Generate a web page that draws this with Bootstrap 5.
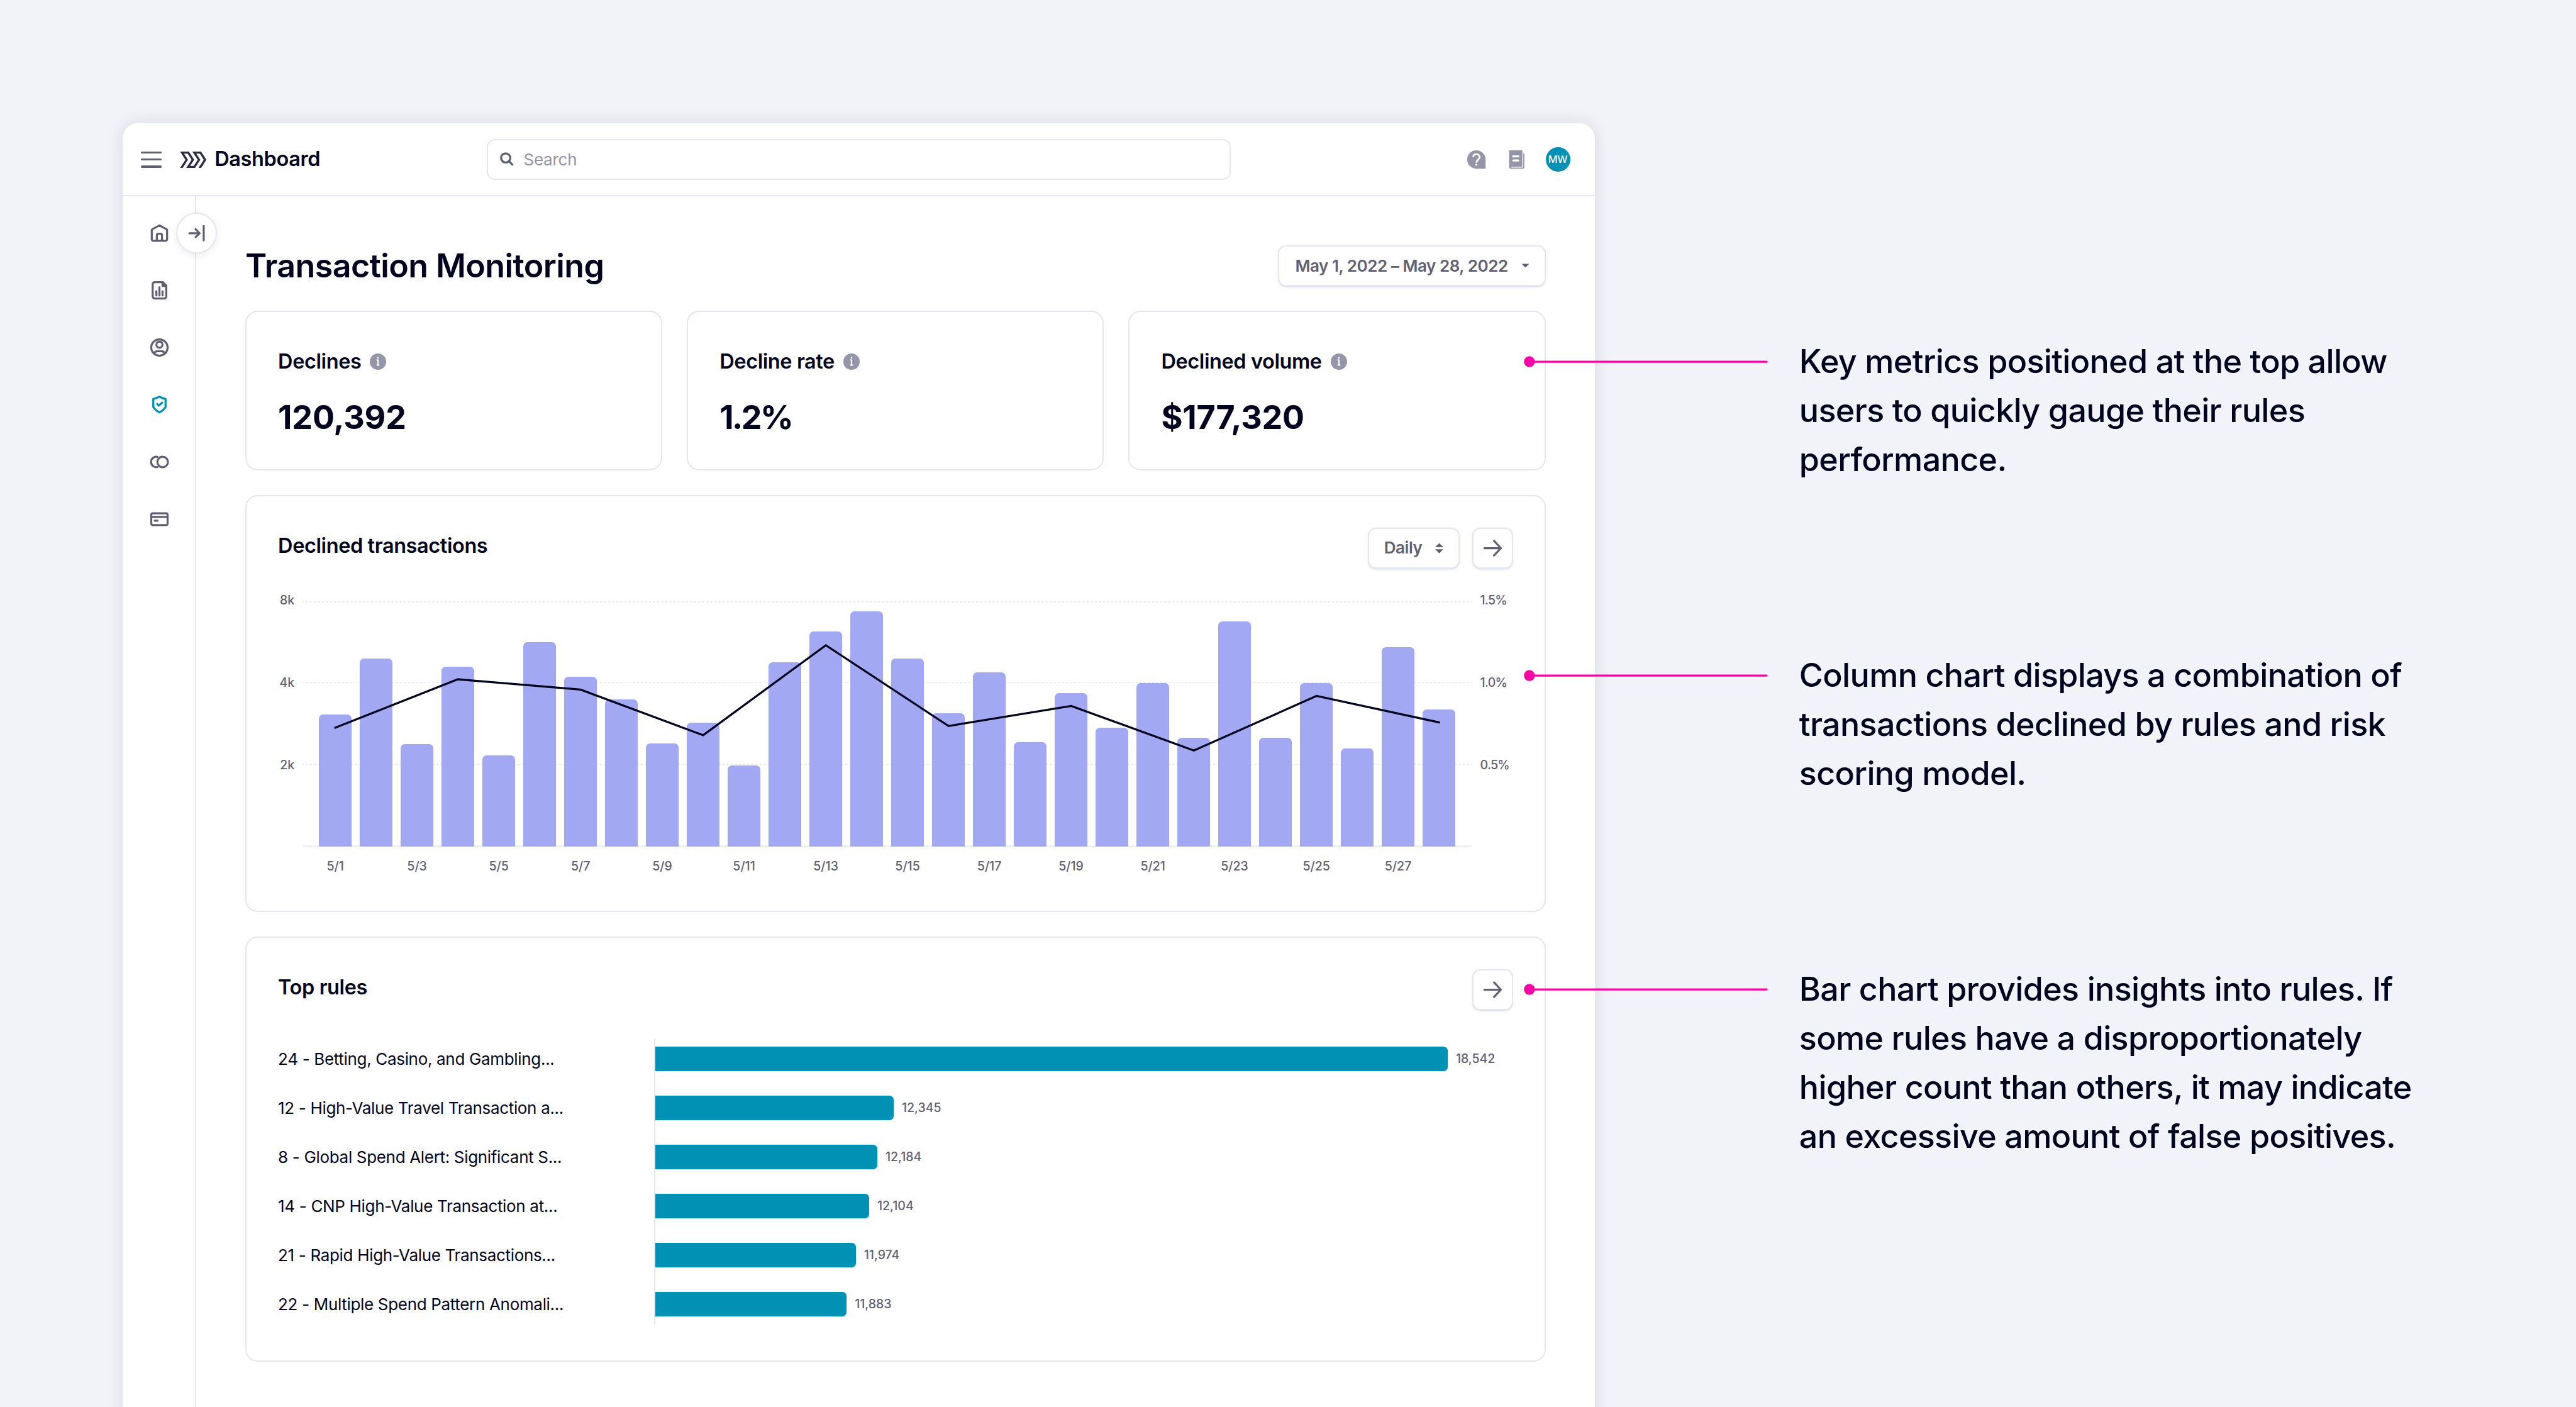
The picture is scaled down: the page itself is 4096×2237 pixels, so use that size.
<!doctype html>
<html lang="en">
<head>
<meta charset="utf-8">
<meta name="viewport" content="width=device-width, initial-scale=1">
<title>Transaction Monitoring</title>
<link href="https://cdn.jsdelivr.net/npm/bootstrap@5.3.0/dist/css/bootstrap.min.css" rel="stylesheet">
<style>
  :root {
    font-size: 26.0063px;
    --u: .0625rem;
    --ink: #01041e;
    --muted: #5f6073;
    --soft: #9495a8;
    --line: #e5e7ef;
    --teal: #0091b5;
    --pink: #ff00a8;
  }
  body {
    background: #f1f3f8;
    color: var(--ink);
    font-family: Inter, "Liberation Sans", sans-serif;
    height: 2237px;
    overflow: hidden;
  }
  svg { display: block; flex: none; overflow: visible; }
  .ico { width: 1.5rem; height: 1.5rem; fill: none; stroke: var(--muted); stroke-width: 2; stroke-linecap: round; stroke-linejoin: round; }
  .app-window {
    width: calc(1440 * var(--u));
    height: calc(1300 * var(--u));
    margin: calc(120 * var(--u)) 0 0 calc(120 * var(--u));
    border-radius: 1rem;
    box-shadow: 0 0 calc(17 * var(--u)) rgba(0, 10, 50, .11);
  }
  .topbar { height: calc(72 * var(--u)); border-bottom: 2px solid var(--line); padding: 2px 1.5rem 0 calc(18 * var(--u)); }
  .topbar-side { width: calc(338 * var(--u)); }
  .burger { width: calc(20 * var(--u)); height: 1rem; margin-right: calc(18 * var(--u)); }
  .burger span { height: calc(2.33 * var(--u)); background: var(--muted); border-radius: var(--u); }
  .brand-logo { width: calc(26 * var(--u)); height: 1rem; overflow: hidden; }
  .heading { font-size: calc(20 * var(--u)); font-weight: 600; line-height: calc(36 * var(--u)); letter-spacing: -.0125em; white-space: nowrap; margin: 0; }
  .search-box { width: calc(728 * var(--u)); height: 2.5rem; border: 2px solid var(--line); border-radius: .5rem; padding-left: calc(7 * var(--u)); gap: .25rem; font-size: 1rem; line-height: 1; letter-spacing: -.01em; color: var(--soft); }
  .avatar { width: 1.5rem; height: 1.5rem; font-size: calc(10 * var(--u)); font-weight: 500; line-height: 1; letter-spacing: -.02em; background: var(--teal); }
  .side { width: calc(72 * var(--u)); border-right: 2px solid var(--line); padding: 1.5rem 0 0 2px; gap: 2rem; }
  .side-toggle { top: 1rem; left: calc(52 * var(--u)); width: 2.5rem; height: 2.5rem; border: 2px solid var(--line); box-shadow: 0 calc(2 * var(--u)) calc(8 * var(--u)) rgba(0, 10, 50, .07); }
  .page-title { font-size: 2rem; font-weight: 600; line-height: 2.5rem; letter-spacing: -.0121em; }
  .panel { --bs-card-border-color: var(--line); --bs-card-border-width: 2px; --bs-card-border-radius: .75rem; --bs-card-inner-border-radius: .6rem; --bs-card-color: var(--ink); --bs-body-color: var(--ink); padding: calc(2rem - 2px); }
  .metric-card { height: calc(156 * var(--u)); gap: 1rem; }
  .metric-value { font-size: 2rem; font-weight: 700; line-height: 2.5rem; letter-spacing: -.0035em; }
  .metric-percent { letter-spacing: -.05em; }
  .info { width: 1rem; height: 1rem; margin-left: calc(.6 * var(--u)); }
  .ctl { height: 2.5rem; border: 2px solid var(--line); border-radius: .5rem; background: #fff; color: var(--muted); font-size: 1rem; font-weight: 600; line-height: 1; letter-spacing: -.0175em; white-space: nowrap; padding: 0 calc(8 * var(--u) - 2px) 0 calc(16 * var(--u) - 2px); box-shadow: 0 var(--u) 0 var(--line), 0 var(--u) calc(3 * var(--u)) rgba(0, 10, 50, .07); }
  .ctl-range { width: calc(262 * var(--u)); padding-left: calc(17 * var(--u) - 2px); }
  .ctl-daily { width: calc(90 * var(--u)); }
  .ctl-arrow { width: 2.5rem; padding: 0; }
  .ctl-daily + .ctl-arrow { margin-left: .75rem; }
  .chart-card { height: calc(408 * var(--u)); }
  .rules-card { height: calc(416 * var(--u)); }
  .axis { font-size: .75rem; font-weight: 500; line-height: 1; color: var(--muted); }
  .chart-body { margin-top: calc(32 * var(--u)); height: calc(240 * var(--u)); }
  .y-axis { width: 1rem; margin-top: calc(-6.5 * var(--u)); height: calc(173 * var(--u)); white-space: nowrap; }
  .y-right { letter-spacing: -.035em; margin-left: calc(8 * var(--u)); width: calc(32 * var(--u)); }
  .plot { width: calc(1144 * var(--u)); height: calc(240 * var(--u)); margin-left: .5rem; }
  .plot-bars { height: 100%; padding: 0 1rem; gap: .5rem; }
  .plot-bars i { width: 2rem; background: #a3a8f2; border-radius: .25rem .25rem 0 0; }
  .x-axis { margin: calc(13.5 * var(--u)) 0 0 calc(24 * var(--u)); width: calc(1144 * var(--u)); padding: 0 1rem; gap: .5rem; }
  .x-axis span { width: 2rem; text-align: center; white-space: nowrap; }
  .rule-rows { margin-top: calc(28 * var(--u)); }
  .rule-names { width: calc(368 * var(--u)); margin-top: calc(-4 * var(--u)); font-size: 1rem; letter-spacing: -.0125em; white-space: nowrap; }
  .rule-names div { height: 3rem; line-height: 3rem; }
  .rule-bars { height: calc(280 * var(--u)); padding: .5rem 0; border-left: 2px solid var(--line); gap: 1.5rem; }
  .rule-bars i { height: 1.5rem; background: var(--teal); border-radius: 0 .25rem .25rem 0; }
  .notes { margin-left: calc(-69.4 * var(--u)); padding-top: calc(330 * var(--u)); z-index: 2; }
  .note { height: calc(307 * var(--u)); }
  .pointer { width: calc(238.5 * var(--u)); height: 3rem; margin-right: calc(31 * var(--u)); }
  .note p { font-size: 2rem; font-weight: 500; line-height: 3rem; letter-spacing: -.0126em; white-space: nowrap; margin: 0; }
</style>
</head>
<body class="d-flex align-items-start">

<main class="app-window bg-white d-flex flex-column flex-shrink-0">
  <header class="topbar d-flex align-items-center">
    <div class="topbar-side d-flex align-items-center">
      <div class="burger d-flex flex-column justify-content-between"><span></span><span></span><span></span></div>
      <svg class="brand-logo" viewBox="0 0 78 48" fill="none" stroke="#2b2d45" stroke-width="6.3" stroke-miterlimit="10"><path d="M1.9 52L20 24 6.4 3H24.7L38.3 24 24.3 45H42.6L56.2 24 42.4 3H60.4L74 24 55.9 52"/></svg>
      <span class="heading ms-2">Dashboard</span>
    </div>
    <div class="search-box d-flex align-items-center">
      <svg class="ico" viewBox="0 0 24 24"><circle cx="10.5" cy="10.5" r="4.5"/><path d="M13.7 13.7L17.6 17.6" style="stroke-linecap:butt"/></svg>
      <span>Search</span>
    </div>
    <div class="d-flex align-items-center gap-3 ms-auto">
      <svg class="ico" viewBox="0 0 24 24"><path d="M12 3a9 9 0 1 0 0 18h9v-9a9 9 0 0 0-9-9z" fill="#9495a8" stroke="none"/><path d="M8.9 9.7C9 7.9 10.2 6.9 12 6.9c1.9 0 3.2 1.1 3.2 2.8 0 2.5-3.2 2.7-3.2 5.6" stroke="#fff" stroke-width="1.7" stroke-linecap="butt"/><circle cx="12" cy="17.2" r=".95" fill="#fff" stroke="none"/></svg>
      <svg class="ico" viewBox="0 0 24 24"><path d="M4.5 3h12a.5.5 0 0 1 .5.5V18.4a.6.6 0 0 1-.6.6H6.5a.5.5 0 0 0 0 1h10a1.4 1.4 0 0 0 1.4-1.4V6c.7 0 1.1.3 1.1 1v12.6a1.4 1.4 0 0 1-1.4 1.4H5.8A1.8 1.8 0 0 1 4 19.2V3.5a.5.5 0 0 1 .5-.5z" fill="#9495a8" stroke="none"/><path d="M8 9h5M8 13h5" stroke="#fff"/></svg>
      <div class="avatar rounded-circle text-white d-flex align-items-center justify-content-center">MW</div>
    </div>
  </header>

  <div class="d-flex flex-grow-1">
    <nav class="side position-relative d-flex flex-column align-items-center flex-shrink-0">
      <svg class="ico" viewBox="0 0 24 24"><path d="M4.5 9.3q0-.7.6-1.1L12 4.5l6.9 3.7q.6.4.6 1.1V18.1a1.5 1.5 0 0 1-1.5 1.5H6a1.5 1.5 0 0 1-1.5-1.5zM9.5 19.5V14.2a1.5 1.5 0 0 1 1.5-1.5h2a1.5 1.5 0 0 1 1.5 1.5v5.3"/></svg>
      <svg class="ico" viewBox="0 0 24 24"><path d="M15.3 4H7.4a2 2 0 0 0-2 2v12a2 2 0 0 0 2 2h9.3a2 2 0 0 0 2-2V7.4zM15 4.5V7.7h3.5M9 13v4M12 9v8M15 13v4"/></svg>
      <svg class="ico" viewBox="0 0 24 24"><circle cx="12" cy="12" r="8"/><circle cx="12" cy="9.2" r="3"/><path d="M6.5 17.7C7.5 16.2 8.7 15.6 10 15.6h4c1.3 0 2.5.6 3.5 2.1"/></svg>
      <svg class="ico" viewBox="0 0 24 24" style="stroke:var(--teal)"><path d="M12 4.1c-1.6.9-3.6 1.8-6 2.3V14.2c1.2 2.2 3.2 3.9 6 5.3 2.8-1.4 4.8-3.1 6-5.3V6.4C15.6 5.9 13.6 5 12 4.1z"/><path d="M9.9 11.3l1.6 1.5 3.2-2.9"/></svg>
      <svg class="ico" viewBox="0 0 24 24"><circle cx="15.15" cy="12" r="5.15"/><path d="M10.1 7.05A5.1 5.1 0 1 0 10.1 16.95"/></svg>
      <svg class="ico" viewBox="0 0 24 24"><rect x="4" y="6.3" width="16" height="11.4" rx="1.5"/><path d="M4 9.7h16M7.4 13.4h2.8"/></svg>
      <div class="side-toggle position-absolute bg-white rounded-circle d-flex align-items-center justify-content-center">
        <svg class="ico" viewBox="0 0 24 24"><path d="M5 12.2H15M11.1 8.3L15 12.2 11.1 16.1M19 5.2V19.3"/></svg>
      </div>
    </nav>

    <section class="p-5 d-flex flex-column gap-4 flex-grow-1">
      <div class="d-flex justify-content-between align-items-center">
        <h1 class="page-title m-0">Transaction Monitoring</h1>
        <button class="ctl ctl-range d-flex align-items-center justify-content-between">May 1, 2022 – May 28, 2022
          <svg class="ico" viewBox="0 0 24 24"><path d="M8.4 10.1h7.3L12 13.9z" fill="#5f6073" stroke="none"/></svg>
        </button>
      </div>

      <div class="d-flex gap-4">
        <div class="card panel metric-card flex-fill w-100">
          <div class="d-flex align-items-center gap-2"><h2 class="heading">Declines</h2>
            <svg class="info" viewBox="0 0 16 16"><circle cx="8" cy="8" r="8" fill="#9495a8"/><circle cx="8" cy="4.2" r=".85" fill="#fff"/><path d="M7.1 6.3H8v5.2M7.1 11.4h1.8" fill="none" stroke="#fff" stroke-width="1.3" stroke-linecap="round" stroke-linejoin="round"/></svg></div>
          <div class="metric-value">120,392</div>
        </div>
        <div class="card panel metric-card flex-fill w-100">
          <div class="d-flex align-items-center gap-2"><h2 class="heading">Decline rate</h2>
            <svg class="info" viewBox="0 0 16 16"><circle cx="8" cy="8" r="8" fill="#9495a8"/><circle cx="8" cy="4.2" r=".85" fill="#fff"/><path d="M7.1 6.3H8v5.2M7.1 11.4h1.8" fill="none" stroke="#fff" stroke-width="1.3" stroke-linecap="round" stroke-linejoin="round"/></svg></div>
          <div class="metric-value metric-percent">1.2%</div>
        </div>
        <div class="card panel metric-card flex-fill w-100">
          <div class="d-flex align-items-center gap-2"><h2 class="heading">Declined volume</h2>
            <svg class="info" viewBox="0 0 16 16"><circle cx="8" cy="8" r="8" fill="#9495a8"/><circle cx="8" cy="4.2" r=".85" fill="#fff"/><path d="M7.1 6.3H8v5.2M7.1 11.4h1.8" fill="none" stroke="#fff" stroke-width="1.3" stroke-linecap="round" stroke-linejoin="round"/></svg></div>
          <div class="metric-value">$177,320</div>
        </div>
      </div>

      <div class="card panel chart-card">
        <div class="d-flex align-items-start">
          <h2 class="heading me-auto">Declined transactions</h2>
          <button class="ctl ctl-daily d-flex align-items-center justify-content-between">Daily
            <svg class="ico" viewBox="0 0 24 24"><path d="M8 11h8L12 7zM8 13h8L12 17z" fill="#5f6073" stroke="none"/></svg>
          </button>
          <button class="ctl ctl-arrow d-flex align-items-center justify-content-center">
            <svg class="ico" viewBox="0 0 24 24"><path d="M3.9 12H20M13.3 4.9L20 12 13.3 19.1"/></svg>
          </button>
        </div>
        <div class="chart-body d-flex">
          <div class="axis y-axis d-flex flex-column justify-content-between text-end"><span>8k</span><span>4k</span><span>2k</span></div>
          <div class="plot position-relative">
            <svg class="position-absolute top-0 start-0 w-100 h-100" viewBox="0 0 1144 240" fill="none" stroke="#e3e6ee"><path d="M0 .5H1144M0 79.5H1144M0 159.5H1144" stroke-dasharray="2 2" stroke-dashoffset="1"/><path d="M0 239.5H1144"/></svg>
            <div class="plot-bars position-relative d-flex align-items-end" id="dailyBars"></div>
            <svg class="position-absolute top-0 start-0 w-100 h-100" viewBox="0 0 1144 240" fill="none" stroke="#01041e" stroke-width="2" stroke-linecap="round"><path id="rateLine"/></svg>
          </div>
          <div class="axis y-axis y-right d-flex flex-column justify-content-between"><span>1.5%</span><span>1.0%</span><span>0.5%</span></div>
        </div>
        <div class="axis x-axis d-flex" id="dayLabels"></div>
      </div>

      <div class="card panel rules-card">
        <div class="d-flex align-items-start justify-content-between">
          <h2 class="heading">Top rules</h2>
          <button class="ctl ctl-arrow d-flex align-items-center justify-content-center">
            <svg class="ico" viewBox="0 0 24 24"><path d="M3.9 12H20M13.3 4.9L20 12 13.3 19.1"/></svg>
          </button>
        </div>
        <div class="rule-rows d-flex">
          <div class="rule-names">
            <div>24 - Betting, Casino, and Gambling...</div>
            <div>12 - High-Value Travel Transaction a...</div>
            <div>8 - Global Spend Alert: Significant S...</div>
            <div>14 - CNP High-Value Transaction at...</div>
            <div>21 - Rapid High-Value Transactions...</div>
            <div>22 - Multiple Spend Pattern Anomali...</div>
          </div>
          <div class="rule-bars d-flex flex-column" id="ruleBars"></div>
        </div>
      </div>
    </section>
  </div>
</main>

<aside class="notes position-relative flex-shrink-0">
  <div class="note d-flex align-items-start">
    <svg class="pointer" viewBox="0 0 238.5 48"><circle cx="5.4" cy="24" r="5.33" fill="#ff00a8"/><path d="M6 24H237.5" stroke="#ff00a8" stroke-width="2" stroke-linecap="round"/></svg>
    <p>Key metrics positioned at the top allow<br>users to quickly gauge their rules<br>performance.</p>
  </div>
  <div class="note d-flex align-items-start">
    <svg class="pointer" viewBox="0 0 238.5 48"><circle cx="5.4" cy="24" r="5.33" fill="#ff00a8"/><path d="M6 24H237.5" stroke="#ff00a8" stroke-width="2" stroke-linecap="round"/></svg>
    <p>Column chart displays a combination of<br>transactions declined by rules and risk<br>scoring model.</p>
  </div>
  <div class="note d-flex align-items-start">
    <svg class="pointer" viewBox="0 0 238.5 48"><circle cx="5.4" cy="24" r="5.33" fill="#ff00a8"/><path d="M6 24H237.5" stroke="#ff00a8" stroke-width="2" stroke-linecap="round"/></svg>
    <p>Bar chart provides insights into rules. If<br>some rules have a disproportionately<br>higher count than others, it may indicate<br>an excessive amount of false positives.</p>
  </div>
</aside>

<script src="https://cdn.jsdelivr.net/npm/bootstrap@5.3.0/dist/js/bootstrap.bundle.min.js"></script>
<script>
  // Daily declines, one column per day of May 1–28
  const declines = [129,184,100,176,89,200,166,144,101,121,79,180,210,230,184,130,170,102,150,116,160,106,220,106,160,96,195,134];
  document.getElementById('dailyBars').innerHTML = declines.map(v => `<i style="height:${v / 2.4}%"></i>`).join('');
  document.getElementById('dayLabels').innerHTML = declines.map((v, i) => `<span>${i % 2 ? '' : '5/' + (i + 1)}</span>`).join('');

  // Decline rate, sampled every third day
  const rate = [123.7, 76.3, 86.4, 131, 43, 122, 102.4, 146, 92.6, 118.5];
  document.getElementById('rateLine').setAttribute('d', 'M' + rate.map((y, i) => `${32 + i * 120} ${y}`).join('L'));

  // Rule hit counts with their bar lengths
  const rules = [['18,542', 775], ['12,345', 233], ['12,184', 217], ['12,104', 209], ['11,974', 196], ['11,883', 187]];
  document.getElementById('ruleBars').innerHTML = rules.map(([n, w]) =>
    `<div class="d-flex align-items-center gap-2"><i style="width:calc(${w} * var(--u))"></i><span class="axis">${n}</span></div>`).join('');
</script>
</body>
</html>
